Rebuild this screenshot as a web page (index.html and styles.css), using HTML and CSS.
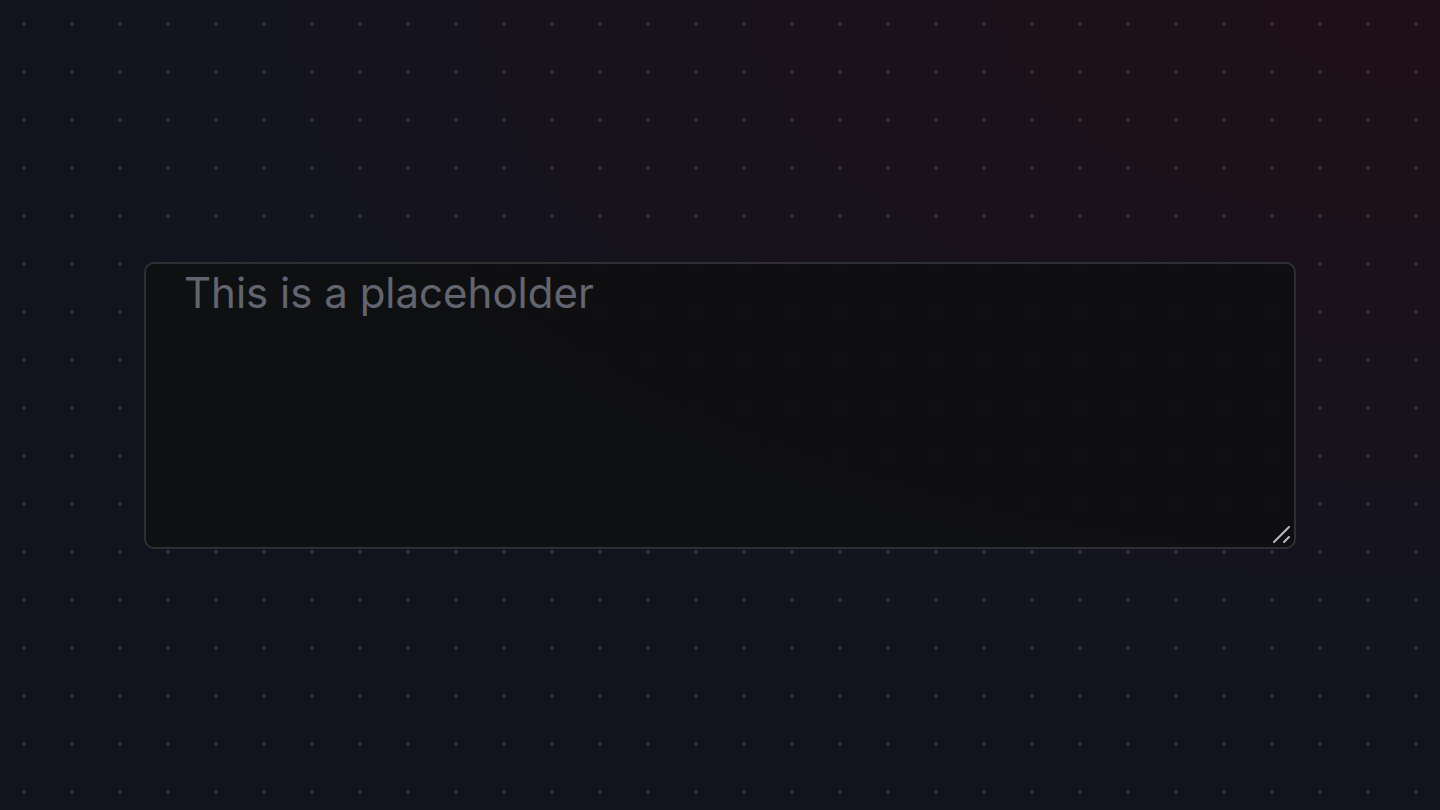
FILE: index.html
```html
<!DOCTYPE html>
<html lang="en">
<head>
  <meta charset="UTF-8" />
  <meta name="viewport" content="width=device-width, initial-scale=1" />
  <title>Textarea</title>
  <link rel="stylesheet" href="styles.css">
</head>
<body>
  <main class="stage">
    <div class="field-wrap">
      <textarea class="field" placeholder="This is a placeholder"></textarea>
      <!-- resize grip -->
      <svg class="grip" width="20" height="20" viewBox="0 0 20 20" aria-hidden="true">
        <path d="M2 17 L17 2 M12 17 L17 12" stroke="#b9bbc0" stroke-width="2" stroke-linecap="round" fill="none" />
      </svg>
    </div>
  </main>
</body>
</html>
```

FILE: styles.css
```css
/* Reset & base */
* {
  margin: 0;
  padding: 0;
  box-sizing: border-box;
}
html,
body {
  height: 100%;
}
body {
  font-family: Inter, 'Noto Sans', sans-serif;
  color-scheme: dark;
  background-color: #11141f;
  background-image:
    radial-gradient(circle at 50% 50%, rgba(255, 255, 255, 0.14) 1.5px, transparent 2px),
    radial-gradient(ellipse 95% 85% at 100% 0%, rgba(38, 13, 19, 0.7), transparent 100%);
  background-size: 48px 48px, 100% 100%;
  overflow: hidden;
}
.stage {
  height: 100%;
  display: flex;
  align-items: center;
  justify-content: center;
}
.field-wrap {
  position: relative;
  width: 80%;
}
.field {
  display: block;
  width: 100%;
  height: 287px;
  padding: 4px 38px;
  font-family: inherit;
  font-size: 42px;
  line-height: 1.2;
  color: #d4d6dc;
  background: rgba(14, 15, 17, 0.9);
  border: 2px solid #2e2f33;
  border-radius: 10px;
  outline: none;
  resize: none;
}
.field::placeholder {
  color: #62656f;
}
.grip {
  position: absolute;
  right: 4px;
  bottom: 4px;
  pointer-events: none;
}
```
